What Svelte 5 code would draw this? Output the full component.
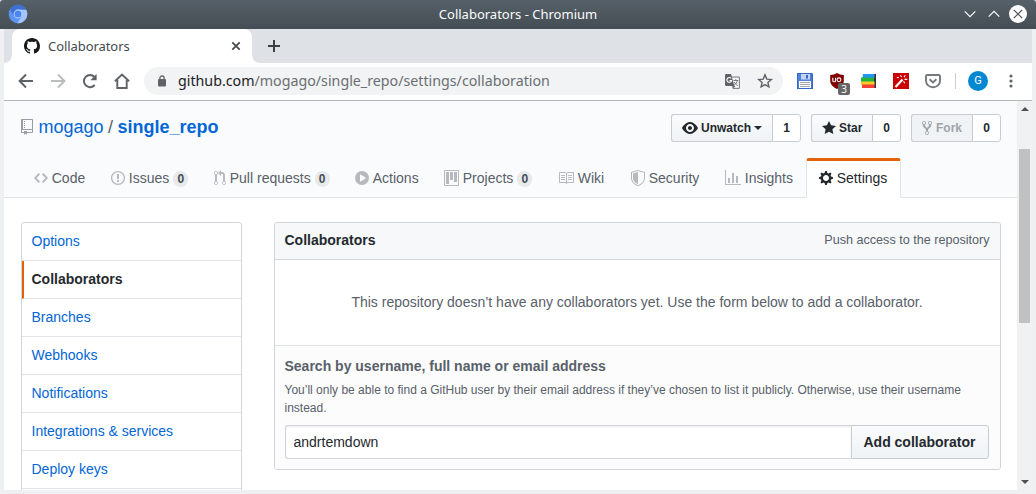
<script>
  const paths = {
    github: 'M8 0C3.58 0 0 3.58 0 8c0 3.54 2.29 6.53 5.47 7.59.4.07.55-.17.55-.38 0-.19-.01-.82-.01-1.49-2.01.37-2.53-.49-2.69-.94-.09-.23-.48-.94-.82-1.13-.28-.15-.68-.52-.01-.53.63-.01 1.08.58 1.23.82.72 1.21 1.87.87 2.33.66.07-.52.28-.87.51-1.07-1.78-.2-3.64-.89-3.64-3.95 0-.87.31-1.59.82-2.15-.08-.2-.36-1.02.08-2.12 0 0 .67-.21 2.2.82.64-.18 1.32-.27 2-.27.68 0 1.36.09 2 .27 1.53-1.04 2.2-.82 2.2-.82.44 1.1.16 1.92.08 2.12.51.56.82 1.27.82 2.15 0 3.07-1.87 3.75-3.65 3.95.29.25.54.73.54 1.48 0 1.07-.01 1.93-.01 2.2 0 .21.15.46.55.38A8.013 8.013 0 0 0 16 8c0-4.42-3.58-8-8-8z',
    repo: 'M4 9H3V8h1v1zm0-3H3v1h1V6zm0-2H3v1h1V4zm0-2H3v1h1V2zm8-1v12c0 .55-.45 1-1 1H6v2l-1.5-1.5L3 16v-2H1c-.55 0-1-.45-1-1V1c0-.55.45-1 1-1h10c.55 0 1 .45 1 1zm-1 10H1v2h2v-1h3v1h5v-2zm0-10H2v9h9V1z',
    code: 'M9.5 3L8 4.5 11.5 8 8 11.5 9.5 13 14 8 9.5 3zm-5 0L0 8l4.5 5L6 11.5 2.5 8 6 4.5 4.5 3z',
    issue: 'M7 2.3c3.14 0 5.7 2.56 5.7 5.7s-2.56 5.7-5.7 5.7A5.71 5.71 0 0 1 1.3 8c0-3.14 2.56-5.7 5.7-5.7zM7 1C3.14 1 0 4.14 0 8s3.14 7 7 7 7-3.14 7-7-3.14-7-7-7zm1 3H6v5h2V4zm0 6H6v2h2v-2z',
    pull: 'M11 11.28V5c-.03-.78-.34-1.47-.94-2.06C9.46 2.35 8.78 2.03 8 2H7V0L4 3l3 3V4h1c.27.02.48.11.69.31.21.2.3.42.31.69v6.28A1.993 1.993 0 0 0 10 15a1.993 1.993 0 0 0 1-3.72zm-1 2.92c-.66 0-1.2-.55-1.2-1.2 0-.65.55-1.2 1.2-1.2.65 0 1.2.55 1.2 1.2 0 .65-.55 1.2-1.2 1.2zM4 3c0-1.11-.89-2-2-2a1.993 1.993 0 0 0-1 3.72v6.56A1.993 1.993 0 0 0 2 15a1.993 1.993 0 0 0 1-3.72V4.72c.59-.34 1-.98 1-1.72zm-.8 10c0 .66-.55 1.2-1.2 1.2-.65 0-1.2-.55-1.2-1.2 0-.65.55-1.2 1.2-1.2.65 0 1.2.55 1.2 1.2zM2 4.2C1.34 4.2.8 3.65.8 3c0-.65.55-1.2 1.2-1.2.65 0 1.2.55 1.2 1.2 0 .65-.55 1.2-1.2 1.2z',
    play: 'M14 8A7 7 0 1 1 0 8a7 7 0 0 1 14 0zm-8.223 3.482l4.599-3.066a.5.5 0 0 0 0-.832L5.777 4.518A.5.5 0 0 0 5 4.934v6.132a.5.5 0 0 0 .777.416z',
    project: 'M10 12h3V2h-3v10zm-4-2h3V2H6v8zm-4 4h3V2H2v12zm-1 1h13V1H1v14zM14 0H1a1 1 0 0 0-1 1v14a1 1 0 0 0 1 1h13a1 1 0 0 0 1-1V1a1 1 0 0 0-1-1z',
    book: 'M3 5h4v1H3V5zm0 3h4V7H3v1zm0 2h4V9H3v1zm11-5h-4v1h4V5zm0 2h-4v1h4V7zm0 2h-4v1h4V9zm2-6v9c0 .55-.45 1-1 1H9.5l-1 1-1-1H2c-.55 0-1-.45-1-1V3c0-.55.45-1 1-1h5.5l1 1 1-1H15c.55 0 1 .45 1 1zm-8 .5L7.5 3H2v9h6V3.5zm7-.5H9.5l-.5.5V12h6V3z',
    shield: 'M0 2l7-2 7 2v6.02C14 12.69 8.69 16 7 16c-1.69 0-7-3.31-7-7.98V2zm1 .75L7 1l6 1.75v5.268C13 12.104 8.449 15 7 15c-1.449 0-6-2.896-6-6.982V2.75zm1 .75L7 2v12c-1.207 0-5-2.482-5-5.985V3.5z',
    graph: 'M16 14v1H0V0h1v14h15zM5 13H3V8h2v5zm4 0H7V3h2v10zm4 0h-2V6h2v7z',
    gear: 'M14 8.77v-1.6l-1.94-.64-.45-1.09.88-1.84-1.13-1.13-1.81.91-1.09-.45-.69-1.92h-1.6l-.63 1.94-1.11.45-1.84-.88-1.13 1.13.91 1.81-.45 1.09L0 7.23v1.59l1.94.64.45 1.09-.88 1.84 1.13 1.13 1.81-.91 1.09.45.69 1.92h1.59l.63-1.94 1.11-.45 1.84.88 1.13-1.13-.92-1.81.47-1.09L14 8.75v.02zM7 11c-1.66 0-3-1.34-3-3s1.34-3 3-3 3 1.34 3 3-1.34 3-3 3z',
    eye: 'M8.06 2C3 2 0 8 0 8s3 6 8.06 6C13 14 16 8 16 8s-3-6-7.94-6zM8 12c-2.2 0-4-1.78-4-4 0-2.2 1.8-4 4-4 2.22 0 4 1.8 4 4 0 2.22-1.78 4-4 4zm2-4c0 1.11-.89 2-2 2-1.11 0-2-.89-2-2 0-1.11.89-2 2-2 1.11 0 2 .89 2 2z',
    star: 'M14 6l-4.9-.64L7 1 4.9 5.36 0 6l3.6 3.26L2.67 14 7 11.67 11.33 14l-.93-4.74L14 6z',
    fork: 'M8 1a1.993 1.993 0 0 0-1 3.72V6L5 8 3 6V4.72A1.993 1.993 0 0 0 2 1a1.993 1.993 0 0 0-1 3.72V6.5l3 3v1.78A1.993 1.993 0 0 0 5 15a1.993 1.993 0 0 0 1-3.72V9.5l3-3V4.72A1.993 1.993 0 0 0 8 1zM2 4.2C1.34 4.2.8 3.65.8 3c0-.65.55-1.2 1.2-1.2.65 0 1.2.55 1.2 1.2 0 .65-.55 1.2-1.2 1.2zm3 10c-.66 0-1.2-.55-1.2-1.2 0-.65.55-1.2 1.2-1.2.65 0 1.2.55 1.2 1.2 0 .65-.55 1.2-1.2 1.2zm3-10c-.66 0-1.2-.55-1.2-1.2 0-.65.55-1.2 1.2-1.2.65 0 1.2.55 1.2 1.2 0 .65-.55 1.2-1.2 1.2z'
  };

  const tabs = [
    { label: 'Code', icon: 'code', w: 14, width: 77 },
    { label: 'Issues', icon: 'issue', w: 14, width: 103, count: 0 },
    { label: 'Pull requests', icon: 'pull', w: 12, width: 141, count: 0 },
    { label: 'Actions', icon: 'play', w: 14, width: 89 },
    { label: 'Projects', icon: 'project', w: 15, width: 114, count: 0 },
    { label: 'Wiki', icon: 'book', w: 16, width: 73 },
    { label: 'Security', icon: 'shield', w: 14, width: 94 },
    { label: 'Insights', icon: 'graph', w: 16, width: 94 },
    { label: 'Settings', icon: 'gear', w: 14, width: 95, selected: true }
  ];

  const menu = ['Options', 'Collaborators', 'Branches', 'Webhooks', 'Notifications', 'Integrations & services', 'Deploy keys'];
  let query = $state('andrtemdown');
</script>

{#snippet octicon(name, w)}
  <svg class="octicon" width={w} height="16" viewBox="0 0 {w} 16"><path fill-rule="evenodd" d={paths[name]} /></svg>
{/snippet}

<div class="window">
  <header class="titlebar">
    <svg class="logo" width="20" height="20" viewBox="0 0 20 20">
      <circle cx="10" cy="10" r="9.3" fill="#5c95f5" />
      <path d="M2 5.3A9.3 9.3 0 0 1 18.2 5.7L10 5.7 6 12z" fill="#3e6fd2" />
      <path d="M10 5.7h8.2A9.3 9.3 0 0 1 9.4 19.3L14 12z" fill="#a3c5fa" />
      <circle cx="10" cy="10" r="4.4" fill="#c7dcfb" />
      <circle cx="10" cy="10" r="3.5" fill="#4a86ee" />
    </svg>
    <span class="window-title">Collaborators - Chromium</span>
    <div class="window-buttons">
      <svg width="12" height="18" viewBox="0 0 12 18"><path d="M.7 6.3 6 11.6l5.3-5.3" /></svg>
      <svg width="12" height="18" viewBox="0 0 12 18"><path d="M.7 11.6 6 6.3l5.3 5.3" /></svg>
      <svg width="18" height="18" viewBox="0 0 18 18"><circle cx="9" cy="9" r="9" fill="#fcfcfc" stroke="none" /><path d="m4.8 4.8 8.4 8.4m0-8.4-8.4 8.4" stroke="#475057" /></svg>
    </div>
  </header>

  <div class="frame">
    <div class="tabstrip">
      <div class="edge left"></div>
      <div class="tab">
        {@render octicon('github', 16)}
        <span>Collaborators</span>
        <svg width="10" height="10" viewBox="0 0 10 10" stroke="#45494d" stroke-width="1.7"><path d="m1.3 1.3 7.4 7.4m0-7.4L1.3 8.7" /></svg>
      </div>
      <div class="edge right"></div>
      <svg class="plus" width="12" height="12" viewBox="0 0 12 12" stroke="#3c4043" stroke-width="2"><path d="M6 0v12M0 6h12" /></svg>
    </div>

    <div class="toolbar">
      <div class="nav-buttons">
        <svg width="16" height="16" viewBox="0 0 16 16" fill="none" stroke="#5f6368" stroke-width="2"><path d="M15 8H2.5M8 1.5 1.6 8 8 14.5" /></svg>
        <svg width="16" height="16" viewBox="0 0 16 16" fill="none" stroke="#babcbe" stroke-width="2"><path d="M1 8h12.5M8 1.5 14.4 8 8 14.5" /></svg>
        <svg width="16" height="16" viewBox="0 0 16 16"><path d="M12.7 12A6.1 6.1 0 1 1 12.4 3.8" fill="none" stroke="#5f6368" stroke-width="2" /><path d="M14.6 1v6.3H8.3z" fill="#5f6368" /></svg>
        <svg width="16" height="16" viewBox="0 0 16 16" fill="none" stroke="#5f6368" stroke-width="1.9"><path d="M.9 8.2 8 1.5l7.1 6.7M3.3 7v8h9.4V7" /></svg>
      </div>
      <div class="address">
        <svg width="8" height="12" viewBox="0 0 8 12"><path d="M1.9 5V3.1a2.1 2.1 0 0 1 4.2 0V5" fill="none" stroke="#5f6368" stroke-width="1.3" /><rect y="4" width="8" height="7.6" rx="1" fill="#5f6368" /></svg>
        <span class="url"><b>github.com</b>/mogago/single_repo/settings/collaboration</span>
        <svg class="translate" width="15" height="15" viewBox="0 0 15 15">
          <path d="M6 3h8.4v11.4H8z" fill="#f1f3f4" stroke="#777b7f" />
          <path d="M0 1.2Q0 0 1.2 0H6l3.4 12H1.2Q0 12 0 10.8z" fill="#5f6368" />
          <path d="M6.2 4.4a2.4 2.4 0 1 0 .4 2.1H4.5" fill="none" stroke="#fff" stroke-width="1.1" />
          <path d="M8.3 6.5h5M10.7 5.2v1.3M12.4 6.5c-.4 2.1-1.6 3.6-3.3 4.7M9.4 8c.6 1.5 1.6 2.6 3.3 3.6" fill="none" stroke="#777b7f" />
          <path d="m8 12 2.2 0L8.5 14.5z" fill="#5f6368" />
        </svg>
        <svg class="favorite" width="16" height="16" viewBox="0 0 16 16"><path d="m8 1.9 1.8 4.2 4.5.4-3.4 3 1 4.4L8 11.6l-3.9 2.3 1-4.4-3.4-3 4.5-.4z" fill="none" stroke="#5f6368" stroke-width="1.4" /></svg>
      </div>
      <div class="extensions">
        <svg width="16" height="16" viewBox="0 0 16 16">
          <path d="M0 0h15l1 1v15H0z" fill="#3567c9" /><path d="M1 1h13.500v14H1z" fill="#5282dc" />
          <path d="M4 1h9v5.500H4z" fill="#c3d5f3" /><path d="M9 2h2v3.500H9z" fill="#3567c9" />
          <path d="M2 8h12v7H2z" fill="#fff" /><path d="M3 9.5h10M3 11.5h10M3 13.5h10" stroke="#a4a6aa" />
        </svg>
        <div class="ublock">
          <svg width="16" height="16" viewBox="0 0 16 16"><path d="M8 0c2 1.3 4.2 2 6.8 2v5.5c0 4-3 6.5-6.8 8.5-3.8-2-6.8-4.5-6.8-8.5V2C3.8 2 6 1.300 8 0z" fill="#800000" /><path d="M3.8 4.700v2.700q0 1.400 1.400 1.400t1.400-1.400V4.700" fill="none" stroke="#fff" stroke-width="1.1" /><circle cx="10" cy="6.8" r="1.9" fill="none" stroke="#fff" stroke-width="1.1" /></svg>
          <span>3</span>
        </div>
        <svg width="16" height="16" viewBox="0 0 16 16"><path d="M13 1h2v14h-2z" fill="#303438" /><path d="M2 1h11.500v4H1.500z" fill="#2196f3" /><path d="M0 4.500h13V9H0z" fill="#23b33a" /><path d="M0 8.500h13.500V12H0z" fill="#ffc928" /><path d="M1 11.500h12.500V15H1z" fill="#f44336" /></svg>
        <svg width="16" height="16" viewBox="0 0 16 16"><path d="M0 0h16v16H0z" fill="#cb0000" /><path d="m2.500 14 7-7.500" stroke="#fff" stroke-width="2.200" /><path d="M8.700 3.800 7.300 2.400M11 4.300l1.300-2M11.500 6.400h2.800M10.500 8.200l1.300 2M3.800 4.500h2" stroke="#fff" stroke-width="1.100" /></svg>
        <svg width="16" height="16" viewBox="0 0 16 16"><path d="M2.300 2h11.400q1.300 0 1.300 1.300v4.500a7 6.500 0 0 1-14 0V3.300Q1 2 2.300 2z" fill="none" stroke="#75787c" stroke-width="1.900" /><path d="m4.600 6.300 3.400 3.200 3.400-3.200" fill="none" stroke="#75787c" stroke-width="1.900" /></svg>
      </div>
      <span class="separator"></span>
      <span class="avatar">G</span>
      <svg class="dots" width="4" height="14" viewBox="0 0 4 14" fill="#5f6368"><circle cx="2" cy="2" r="1.6" /><circle cx="2" cy="7" r="1.6" /><circle cx="2" cy="12" r="1.6" /></svg>
    </div>

    <div class="viewport">
      <div class="page">
        <div class="repo-head">
          <div class="title-row">
            <h1>{@render octicon('repo', 12)}<a class="owner" href="#owner">mogago</a><span class="slash">/</span><a class="name" href="#repo">single_repo</a></h1>
            <div class="actions">
              <div class="group" style:width="130px"><button>{@render octicon('eye', 16)}<span>Unwatch</span><i class="caret"></i></button><span class="number">1</span></div>
              <div class="group"><button>{@render octicon('star', 14)}<span>Star</span></button><span class="number">0</span></div>
              <div class="group"><button disabled>{@render octicon('fork', 10)}<span>Fork</span></button><span class="number">0</span></div>
            </div>
          </div>
          <nav class="reponav">
            {#each tabs as t}
              <a class:selected={t.selected} href="#{t.icon}" style:width="{t.width}px">
                {@render octicon(t.icon, t.w)}<span>{t.label}</span>
                {#if t.count !== undefined}<span class="counter">{t.count}</span>{/if}
              </a>
            {/each}
          </nav>
        </div>

        <div class="content">
          <nav class="menu">
            {#each menu as item}
              <a class:current={item === 'Collaborators'} href="#{item}">{item}</a>
            {/each}
            <a href="#more" aria-label="More"></a>
          </nav>
          <section class="box">
            <div class="box-head"><h2>Collaborators</h2><span>Push access to the repository</span></div>
            <p class="blank">This repository doesn’t have any collaborators yet. Use the form below to add a collaborator.</p>
            <form>
              <label for="who">Search by username, full name or email address</label>
              <p>You’ll only be able to find a GitHub user by their email address if they’ve chosen to list it publicly. Otherwise, use their username<br />instead.</p>
              <div class="input-row">
                <input id="who" bind:value={query} />
                <button type="button">Add collaborator</button>
              </div>
            </form>
          </section>
        </div>
      </div>
      <div class="scrollbar"><i class="up"></i><i class="thumb"></i><i class="down"></i></div>
    </div>
  </div>
</div>

<style>
  :global(body) { margin: 0; background: #eff0f1; }
  .window { width: 1036px; height: 494px; overflow: hidden; background: #eff0f1; font-family: "Liberation Sans", Arial, sans-serif; color: #24292e; }
  .window * { box-sizing: border-box; }
  svg { display: block; flex: none; }
  a { text-decoration: none; }
  .octicon { fill: currentColor; }

  .titlebar { height: 29px; display: grid; grid-template-columns: 100px 1fr 100px; align-items: center; background: linear-gradient(#566068, #454d54); border-radius: 3px 3px 0 0; color: #fcfcfc; font: 13px/29px "Noto Sans", sans-serif; }
  .logo { margin: -1px 0 0 8px; }
  .window-title { text-align: center; }
  .window-buttons { display: flex; gap: 12px; justify-content: flex-end; padding: 0 9px 1px 0; fill: none; stroke: #fcfcfc; stroke-width: 1.2; }
  .window-buttons svg:last-child { margin-left: -3px; }

  .frame { margin: 0 4px; }
  .tabstrip { height: 34px; display: flex; background: #dee1e6; }
  .edge { width: 8px; background: #fff; }
  .edge::before { content: ''; display: block; height: 34px; background: #dee1e6; }
  .edge.left::before { border-bottom-right-radius: 8px; }
  .edge.right::before { border-bottom-left-radius: 8px; }
  .tab { width: 240px; height: 34px; display: flex; align-items: center; padding: 0 11px 0 12px; background: #fff; border-radius: 8px 8px 0 0; color: #45494d; font: 13px/34px "Noto Sans", sans-serif; }
  .tab .octicon { color: #16191c; }
  .tab span { flex: 1; margin-left: 8px; letter-spacing: -.07px; }
  .plus { margin: 11px 0 0 8px; }

  .toolbar { height: 38px; display: flex; align-items: center; padding-bottom: 1px; background: #fff; border-bottom: 1px solid #b5b4b6; }
  .nav-buttons { display: flex; gap: 16px; padding-left: 14px; width: 140px; }
  .address { width: 639px; height: 28px; display: flex; align-items: center; padding: 0 10px 0 14px; background: #f1f3f4; border-radius: 14px; font: 14.24px/28px "Noto Sans", sans-serif; color: #6b6f73; }
  .url { flex: 1; margin-left: 12px; }
  .url b { font-weight: 400; color: #202124; }
  .translate { margin-right: 17px; }
  .extensions { display: flex; gap: 16px; margin-left: 14px; }
  .ublock { position: relative; }
  .ublock span { position: absolute; left: 9px; top: 10px; width: 12px; height: 12px; border-radius: 2px; background: #666; color: #fff; font: 10px/12px "Noto Sans", sans-serif; text-align: center; }
  .separator { width: 1px; height: 16px; margin-left: 14px; background: #ccced1; }
  .avatar { width: 20px; height: 20px; margin-left: 12px; border-radius: 50%; background: #0288d1; color: #fff; font: 11px/20px Roboto, sans-serif; text-align: center; }
  .dots { margin-left: 21px; }

  .viewport { height: 389px; display: flex; overflow: hidden; background: #fff; }
  .page { width: 1013px; }
  .repo-head { height: 97px; background: #fafbfc; border-bottom: 1px solid #e1e4e8; }
  .title-row { height: 57px; display: flex; justify-content: space-between; padding: 13px 16px 0 17px; }
  h1 { display: flex; height: 26px; margin: 0; font-size: 18px; line-height: 26px; font-weight: 400; }
  h1 .octicon { color: #999da1; margin: 5px 5.5px 0 0; }
  h1 a { color: #0366d6; }
  h1 .slash { margin: 0 4.5px; color: #586069; }
  h1 .name { font-weight: 700; }
  .actions { display: flex; gap: 10px; }
  .group { display: flex; width: 90px; height: 28px; font-size: 12px; font-weight: 700; line-height: 26px; }
  .group button { flex: 1; display: flex; align-items: center; gap: 3px; padding: 0 0 0 10px; border: 1px solid #c8ccd0; border-right: 0; border-radius: 3px 0 0 3px; background: linear-gradient(#fafbfc, #eff3f6); color: #24292e; font: inherit; }
  .group button:disabled { gap: 4px; color: #a0a4a9; background: #eff3f6; }
  .caret { border: 4px solid transparent; border-top-color: currentColor; border-bottom: 0; }
  .number { width: 29px; border: 1px solid #c8ccd0; border-radius: 0 3px 3px 0; background: #fff; text-align: center; }
  .reponav { display: flex; height: 40px; padding-left: 17px; font-size: 14px; }
  .reponav a { display: flex; flex: none; align-items: center; height: 40px; padding: 0 0 0 13px; color: #586069; white-space: nowrap; }
  .reponav a .octicon { color: #b7babd; margin-right: 3.75px; }
  .reponav a.selected { padding: 0 0 3px 12px; border: 1px solid #e1e4e8; border-top: 3px solid #e36209; border-bottom: 0; border-radius: 3px 3px 0 0; background: #fff; color: #24292e; }
  .reponav a.selected .octicon { color: #24292e; }
  .counter { min-width: 15px; height: 16px; margin: 2px 0 0 4px; border-radius: 8px; background: #e7e9eb; color: #444d56; font-size: 12px; font-weight: 700; line-height: 16px; text-align: center; }

  .content { display: flex; gap: 32px; padding: 24px 16px 0 17px; }
  .menu { width: 221px; border: 1px solid #d1d5da; border-radius: 3px; font-size: 14px; }
  .menu a { display: block; height: 38px; padding-left: 9.5px; border-bottom: 1px solid #e1e4e8; color: #0366d6; line-height: 37px; }
  .menu a.current { padding-left: 7.5px; border-left: 2px solid #e36209; color: #24292e; font-weight: 700; }
  .box { width: 727px; height: 248px; border: 1px solid #d1d5da; border-radius: 3px; background: #fff; }
  .box-head { display: flex; justify-content: space-between; height: 37px; padding: 0 10.5px 0 9.5px; border-bottom: 1px solid #d1d5da; border-radius: 2px 2px 0 0; background: #f6f8fa; line-height: 35px; }
  h2 { margin: 0; font-size: 14px; }
  .box-head span { color: #586069; font-size: 12.6px; }
  .blank { height: 85px; margin: 0; padding-right: 1px; color: #586069; font-size: 14px; line-height: 85px; text-align: center; }
  form { height: 124px; padding: 10px 11px 0 10px; border-top: 1px solid #dfe2e5; border-radius: 0 0 3px 3px; background: #fcfcfc; color: #586069; }
  form label { display: block; margin-left: -.5px; font-size: 14px; line-height: 20px; font-weight: 700; }
  form p { margin: 5px 0 8px -.5px; font-size: 12px; line-height: 18px; white-space: nowrap; }
  .input-row { display: flex; height: 34px; }
  input { flex: 1; min-width: 0; padding: 0 7.5px; border: 1px solid #d1d5da; border-right: 0; border-radius: 3px 0 0 3px; box-shadow: inset 0 1px 2px rgba(27, 31, 35, .075); background: #fff; color: #24292e; font: 14px "Liberation Sans", Arial, sans-serif; outline: 0; }
  .input-row button { width: 138px; padding: 0 1px 0 0; border: 1px solid #c8ccd0; border-radius: 0 3px 3px 0; background: linear-gradient(#fafbfc, #eff3f6); color: #24292e; font: 700 14px "Liberation Sans", Arial, sans-serif; }
  .scrollbar { width: 15px; display: flex; flex-direction: column; align-items: center; background: #f1f1f1; }
  .up { margin-top: 6px; border: 4px solid transparent; border-top: 0; border-bottom-color: #505050; }
  .thumb { width: 11px; height: 174px; margin-top: 38px; background: #c1c1c1; }
  .down { margin: auto 0 6px; border: 4px solid transparent; border-bottom: 0; border-top-color: #505050; }
</style>
